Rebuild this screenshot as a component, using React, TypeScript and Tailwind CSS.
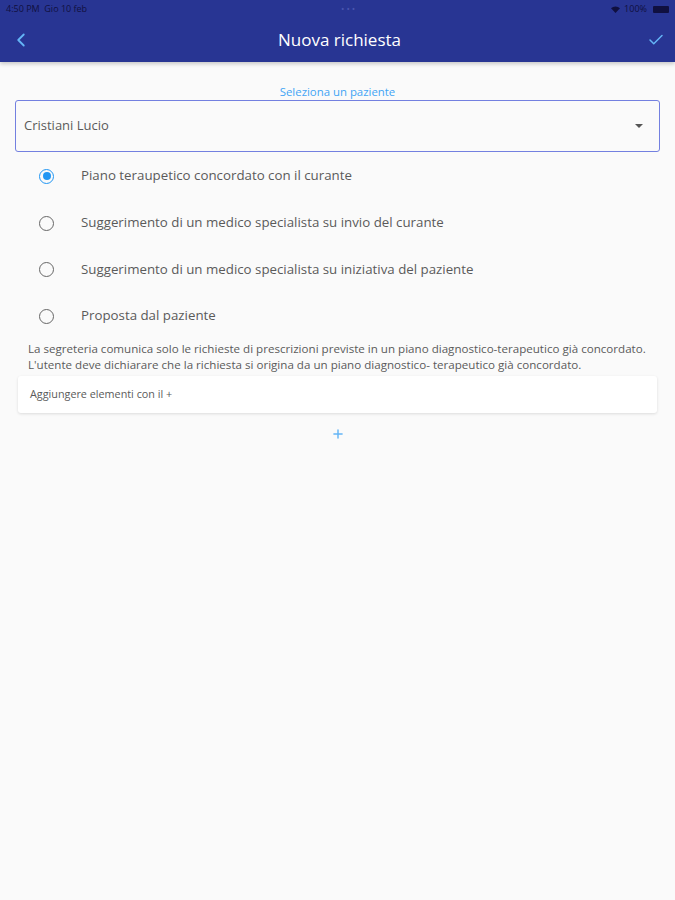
import { ChevronLeft, Check, Plus } from 'lucide-react'

const OPTIONS = [
  'Piano teraupetico concordato con il curante',
  'Suggerimento di un medico specialista su invio del curante',
  'Suggerimento di un medico specialista su iniziativa del paziente',
  'Proposta dal paziente',
]

export default function App() {
  return (
    <div
      className="min-h-[900px] w-[675px] bg-[#fafafa]"
      style={{ fontFamily: '"Open Sans", "Noto Sans", sans-serif' }}
    >
      {/* Header */}
      <div className="bg-[#283593] shadow-[0_2px_4px_rgba(0,0,0,0.2)]">
        <div className="flex h-[18px] items-center justify-between px-[6px] text-[9px] text-[#101040]">
          <span>4:50 PM&nbsp;&nbsp;Gio 10 feb</span>
          <span className="tracking-[2px] text-[#4a56b0]">•••</span>
          <div className="flex items-center gap-1">
            <svg width="9" height="7" viewBox="0 0 9 7" fill="#101040">
              <path d="M4.5 7 0 2.2A6.5 6.5 0 0 1 9 2.2Z" />
            </svg>
            <span>100%</span>
            <span className="ml-[2px] h-[7px] w-[16px] rounded-[1px] bg-[#101040]" />
          </div>
        </div>
        <div className="flex h-[44px] items-center justify-between px-[10px]">
          <ChevronLeft className="h-[22px] w-[22px] text-[#64b5f6]" strokeWidth={2} />
          <h1 className="text-[17px] text-white">Nuova richiesta</h1>
          <Check className="h-[18px] w-[18px] text-[#64b5f6]" strokeWidth={2} />
        </div>
      </div>

      {/* Patient select */}
      <div className="mt-[23px] text-center text-[11.4px] leading-[14px] text-[#42a5f5]">
        Seleziona un paziente
      </div>
      <div className="mx-[15px] mt-[1px] flex h-[52px] items-center justify-between rounded-[3px] border-[1.5px] border-[#7380e0] bg-[#fafafa] pl-[8px] pr-[16px]">
        <span className="text-[13px] text-[#5a5a5a]">Cristiani Lucio</span>
        <svg width="8" height="4" viewBox="0 0 8 4">
          <path d="M0 0h8L4 4z" fill="#555" />
        </svg>
      </div>

      {/* Radio options */}
      <div className="mt-[1px]">
        {OPTIONS.map((opt, i) => (
          <div key={opt} className="flex h-[46.7px] items-center pl-[39px]">
            {i === 0 ? (
              <span className="flex h-[15px] w-[15px] items-center justify-center rounded-full border-[1.5px] border-[#2196f3]">
                <span className="h-[8px] w-[8px] rounded-full bg-[#2196f3]" />
              </span>
            ) : (
              <span className="h-[15px] w-[15px] rounded-full border-[1.5px] border-[#666]" />
            )}
            <span className="ml-[27px] text-[13.3px] text-[#5a5a5a]">{opt}</span>
          </div>
        ))}
      </div>

      {/* Notice */}
      <p className="mt-[1px] px-[28px] text-[11.6px] leading-[16px] text-[#5a5a5a]">
        La segreteria comunica solo le richieste di prescrizioni previste in un piano diagnostico-terapeutico già concordato.
        <br />
        L'utente deve dichiarare che la richiesta si origina da un piano diagnostico- terapeutico già concordato.
      </p>

      <div className="mx-[18px] mt-[3px] flex h-[37px] items-center rounded-[3px] bg-white px-[12px] shadow-[0_1px_3px_rgba(0,0,0,0.12)]">
        <span className="text-[10.8px] text-[#5a5a5a]">Aggiungere elementi con il +</span>
      </div>

      <div className="mt-[14px] flex justify-center">
        <Plus className="h-[14px] w-[14px] text-[#64b5f6]" strokeWidth={2.5} />
      </div>
    </div>
  )
}
